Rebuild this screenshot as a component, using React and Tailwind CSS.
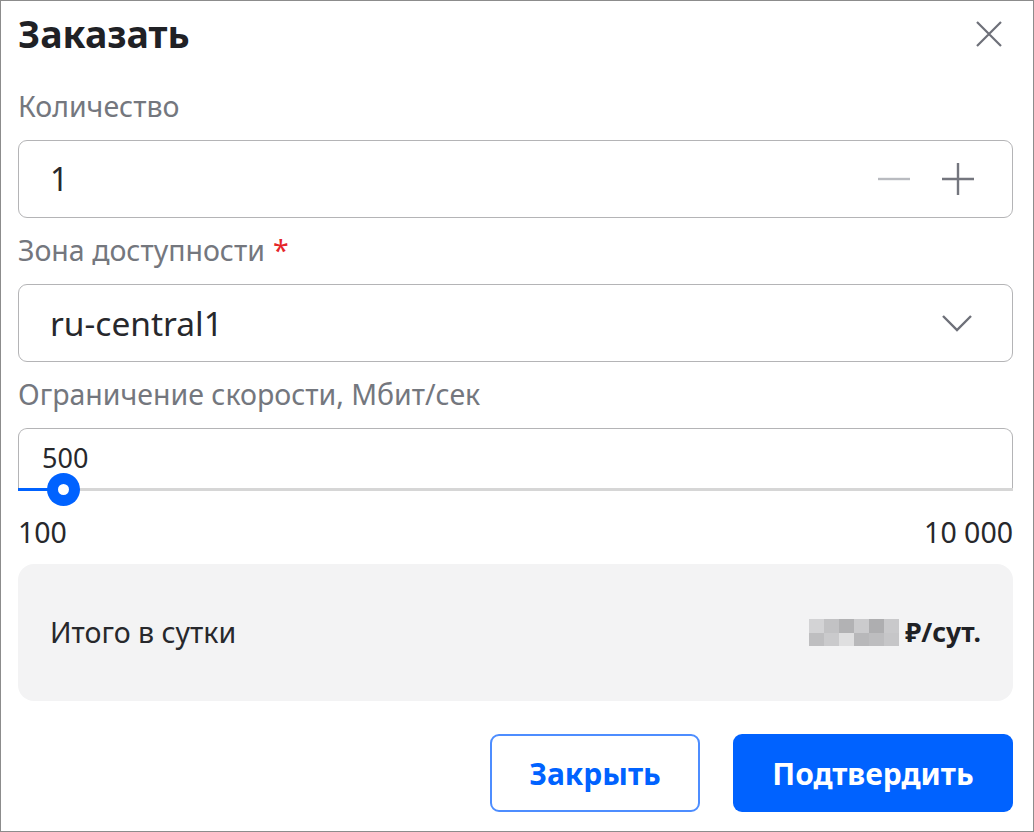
import React, { useState } from 'react'

const font = { fontFamily: '"Noto Sans", "Open Sans", sans-serif' }

function Label({ children, required }) {
  return (
    <div className="h-[36px] flex items-center text-[28.5px] text-[#74777e] leading-none">
      {children}
      {required && <span className="text-[#e5262b] ml-[8px]">*</span>}
    </div>
  )
}

export default function App() {
  const [count] = useState(1)

  return (
    <div
      className="w-[1034px] h-[832px] bg-white border border-[#8c8c8c] pl-[17px] pr-[20px] text-[#27282c] flex flex-col"
      style={font}
    >
      {/* Header */}
      <div className="flex items-center justify-between h-[44px] mt-[11px]">
        <h2 className="text-[37.5px] font-bold leading-none text-[#202125]">Заказать</h2>
        <button className="w-[26px] h-[26px] mr-[11px] flex items-center justify-center text-[#6e7079]">
          <svg width="26" height="26" viewBox="0 0 26 26" fill="none" stroke="currentColor" strokeWidth="2.2">
            <path d="M1 1 L25 25 M25 1 L1 25" />
          </svg>
        </button>
      </div>

      <div className="mt-[32px]">
        <Label>Количество</Label>
      </div>
      <div className="mt-[16px] h-[78px] border border-[#b4b4b6] rounded-[9px] flex items-center pl-[31px] pr-[38px]">
        <span className="text-[32px] flex-1">{count}</span>
        <svg width="32" height="32" viewBox="0 0 32 32" stroke="#b9bbc0" strokeWidth="2.4" className="mr-[32px]">
          <path d="M0 16 H32" />
        </svg>
        <svg width="32" height="32" viewBox="0 0 32 32" stroke="#74767e" strokeWidth="2.4">
          <path d="M0 16 H32 M16 0 V32" />
        </svg>
      </div>

      <div className="mt-[14px]">
        <Label required>Зона доступности</Label>
      </div>
      <div className="mt-[16px] h-[78px] border border-[#b4b4b6] rounded-[9px] flex items-center pl-[31px] pr-[40px]">
        <span className="text-[33.5px] flex-1">ru-central1</span>
        <svg width="30" height="18" viewBox="0 0 30 18" fill="none" stroke="#6e7079" strokeWidth="2.4">
          <path d="M1 2 L15 16 L29 2" />
        </svg>
      </div>

      <div className="mt-[14px]">
        <Label>Ограничение скорости, Мбит/сек</Label>
      </div>
      <div className="mt-[16px] relative h-[62px] border border-b-0 border-[#b4b4b6] rounded-t-[9px] flex items-start pl-[23px] pt-[13px]">
        <span className="text-[27px] leading-[32px]">500</span>
        <div className="absolute left-[-1px] right-[-1px] bottom-[-1px] h-[3px] bg-[#d6d6d6]">
          <div className="h-full w-[46px] bg-[#0062ff]" />
          <div className="absolute left-[29px] top-[-15px] w-[33px] h-[33px] rounded-full bg-[#0062ff] flex items-center justify-center">
            <div className="w-[11px] h-[11px] rounded-full bg-white" />
          </div>
        </div>
      </div>
      <div className="mt-[24px] h-[36px] flex items-center justify-between text-[28.5px] leading-none">
        <span>100</span>
        <span>10 000</span>
      </div>

      <div className="mt-[14px] h-[137px] bg-[#f3f3f4] rounded-[16px] flex items-center justify-between pl-[32px] pr-[32px]">
        <span className="text-[28.5px]">Итого в сутки</span>
        <div className="flex items-center">
          <div className="grid grid-cols-6 w-[90px] h-[27px] mr-[6px]">
            {['#d3d3d5', '#c2c2c4', '#b2b2b4', '#cbcbcd', '#aeaeb0', '#c9c9cb', '#bebec0', '#cacacc', '#dfdfe0', '#b8b8ba', '#bdbdbf', '#c6c6c8'].map((c, i) => (
              <div key={i} className="h-[13.5px]" style={{ backgroundColor: c }} />
            ))}
          </div>
          <span className="text-[26.5px] font-bold text-[#202125]">₽/сут.</span>
        </div>
      </div>

      <div className="mt-[33px] flex justify-end gap-[33px]">
        <button className="w-[210px] h-[78px] rounded-[9px] border-2 border-[#4d8dff] text-[#0062ff] text-[30px] font-bold">
          Закрыть
        </button>
        <button className="w-[280px] h-[78px] rounded-[9px] bg-[#0062ff] text-white text-[30px] font-bold">
          Подтвердить
        </button>
      </div>
    </div>
  )
}
